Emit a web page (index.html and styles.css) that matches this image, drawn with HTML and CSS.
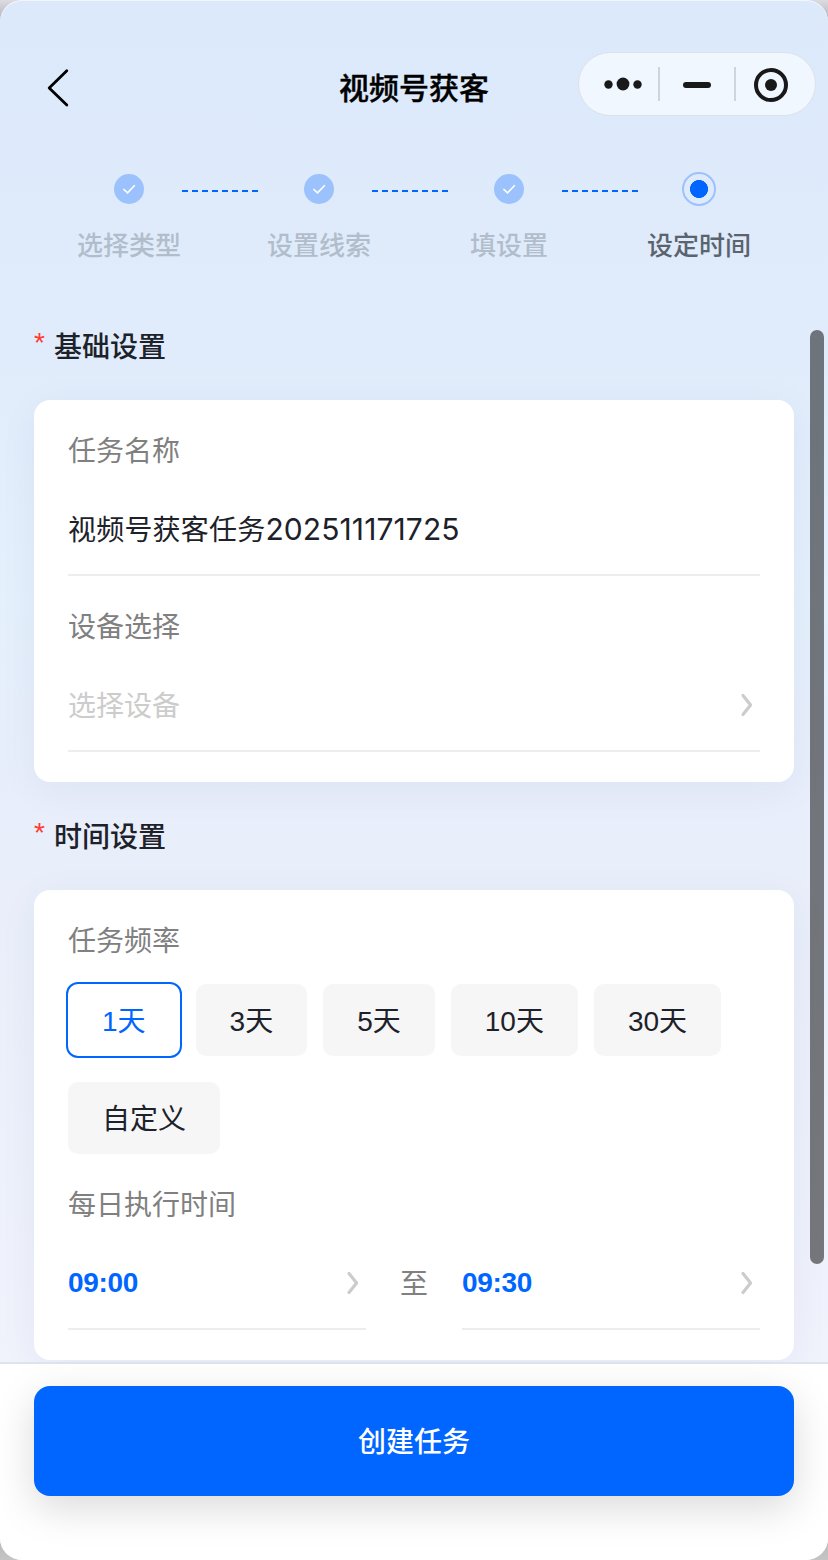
FILE: index.html
```html
<!DOCTYPE html>
<html lang="zh-CN">
<head>
    <meta charset="UTF-8">
    <title>视频号获客</title>
    <link rel="stylesheet" href="styles.css">
</head>
<body>
    <div class="window">
        <header class="navbar">
            <svg class="back" width="24" height="40" viewBox="0 0 24 40">
                <path d="M20.8 2.8 L3.2 20 L20.8 37" fill="none" stroke="#000" stroke-width="2.8" stroke-linecap="round" stroke-linejoin="round"/>
            </svg>
            <h1>视频号获客</h1>
            <!-- 小程序胶囊按钮 -->
            <div class="capsule">
                <svg width="238" height="64" viewBox="0 0 238 64" fill="#191919">
                    <circle cx="30.5" cy="32.5" r="4.2"/>
                    <circle cx="45" cy="32" r="6.4"/>
                    <circle cx="59.5" cy="32.5" r="4.2"/>
                    <rect x="80" y="15" width="2" height="34" fill="#cfd5de"/>
                    <rect x="105" y="30" width="28" height="6" rx="3"/>
                    <rect x="156" y="15" width="2" height="34" fill="#cfd5de"/>
                    <circle cx="193" cy="33" r="15" fill="none" stroke="#191919" stroke-width="4"/>
                    <circle cx="193" cy="33" r="6"/>
                </svg>
            </div>
        </header>

        <div class="steps">
            <div class="step">
                <svg class="dot" width="30" height="30" viewBox="0 0 30 30"><path d="M9.4 15 L13.5 18.9 L20.8 11.2"/></svg>
                <span>选择类型</span>
            </div>
            <div class="step">
                <svg class="dot" width="30" height="30" viewBox="0 0 30 30"><path d="M9.4 15 L13.5 18.9 L20.8 11.2"/></svg>
                <span>设置线索</span>
            </div>
            <div class="step">
                <svg class="dot" width="30" height="30" viewBox="0 0 30 30"><path d="M9.4 15 L13.5 18.9 L20.8 11.2"/></svg>
                <span>填设置</span>
            </div>
            <div class="step active">
                <div class="dot"></div>
                <span>设定时间</span>
            </div>
        </div>

        <main class="content">
            <h2><i>*</i>基础设置</h2>
            <div class="card">
                <div class="label">任务名称</div>
                <div class="field">
                    <span class="task_name">视频号获客任务<span class="num">202511171725</span></span>
                </div>
                <div class="label second">设备选择</div>
                <div class="field">
                    <span class="placeholder">选择设备</span>
                    <svg class="arrow" width="16" height="26" viewBox="0 0 16 26"><path d="M4 3.5 L11.6 13 L4 22.5"/></svg>
                </div>
            </div>

            <h2><i>*</i>时间设置</h2>
            <div class="card">
                <div class="label">任务频率</div>
                <div class="options">
                    <div class="option selected">1天</div>
                    <div class="option">3天</div>
                    <div class="option">5天</div>
                    <div class="option">10天</div>
                    <div class="option">30天</div>
                    <div class="option">自定义</div>
                </div>
                <div class="label">每日执行时间</div>
                <div class="time_row">
                    <div class="field">
                        <span class="time">09:00</span>
                        <svg class="arrow" width="16" height="26" viewBox="0 0 16 26"><path d="M4 3.5 L11.6 13 L4 22.5"/></svg>
                    </div>
                    <span class="to">至</span>
                    <div class="field">
                        <span class="time">09:30</span>
                        <svg class="arrow" width="16" height="26" viewBox="0 0 16 26"><path d="M4 3.5 L11.6 13 L4 22.5"/></svg>
                    </div>
                </div>
            </div>
        </main>

        <footer class="bottom">
            <button type="button">创建任务</button>
        </footer>
        <div class="scrollbar"></div>
    </div>
</body>
</html>
```

FILE: styles.css
```css
* {
    box-sizing: border-box;
}
body {
    margin: 0;
    background: linear-gradient(#dcdbe0 0, #b5b3bd 20px, #b5b5b5 1530px, #c4c4c4 1560px);
    font-family: "Liberation Sans", "Noto Sans CJK SC", sans-serif;
    font-size: 28px;
    color: #1d2129;
}
.window {
    position: relative;
    display: flex;
    flex-direction: column;
    height: 1560px;
    border-radius: 22px;
    overflow: hidden;
    background: linear-gradient(#dce9fb 0, #e0ecfb 340px, #e4f0fc 600px, #e7eefb 740px, #e9eefa 900px, #f0f3fc 1362px);
    box-shadow: inset 0 1px 0 #f2f7fd;
}

/* 顶部导航 */
.navbar {
    display: grid;
    grid-template-columns: 293px 1fr 238px;
    align-items: center;
    height: 64px;
    margin-top: 52px;
    padding: 0 12px 0 46px;
}
.back {
    margin-top: 8px;
}
h1 {
    margin: 10px 0 0;
    font-size: 30px;
    line-height: 40px;
    font-weight: 500;
    color: #000;
    -webkit-text-stroke: 0.4px;
}
.capsule {
    width: 238px;
    height: 64px;
    border: 1px solid #dde1e7;
    border-radius: 32px;
    background: #f1f7ff;
}
.capsule svg {
    display: block;
    margin: -1px;
}

/* 步骤条 */
.steps {
    display: flex;
    padding: 0 34px;
    margin-top: 56px;
}
.step {
    position: relative;
    width: 190px;
    height: 92px;
    display: flex;
    flex-direction: column;
    align-items: center;
    justify-content: space-between;
    padding-top: 2px;
    font-size: 26px;
    line-height: 36px;
    font-weight: 500;
    color: #b1bdcb;
}
.step:not(:last-child)::after {
    content: "";
    position: absolute;
    left: 148px;
    top: 18px;
    width: 76px;
    height: 2px;
    background: repeating-linear-gradient(90deg, #0066ff 0 6px, transparent 6px 10px);
}
.dot {
    border-radius: 50%;
    background: #9bc2fd;
}
.dot path {
    fill: none;
    stroke: #fff;
    stroke-width: 1.6;
}
.step.active {
    padding-top: 0;
    color: #5b636e;
}
.active .dot {
    width: 34px;
    height: 34px;
    border: 2px solid #9bc2fd;
    background: radial-gradient(circle, #0066ff 8.7px, transparent 9.3px);
}

/* 表单 */
.content {
    flex: 1;
    padding: 0 34px;
}
h2 {
    display: flex;
    margin: 64px 0 32px;
    font-size: 28px;
    line-height: 40px;
    font-weight: 500;
}
.card + h2 {
    margin-top: 36px;
}
h2 i {
    width: 20px;
    line-height: 30px;
    font-style: normal;
    font-weight: 400;
    color: #ff3b30;
}
.card {
    padding: 32px 34px 30px;
    border-radius: 16px;
    background: #fff;
    box-shadow: 0 8px 40px rgba(0, 30, 90, 0.05);
}
.label {
    line-height: 40px;
    color: #808080;
}
.label.second {
    margin-top: 32px;
}
.field {
    display: flex;
    align-items: center;
    justify-content: space-between;
    height: 104px;
    padding-top: 12px;
    border-bottom: 2px solid #ededed;
}
.task_name {
    margin-top: -2px;
    letter-spacing: 0.2px;
}
.num {
    font-family: Inter, sans-serif;
    font-size: 30px;
    letter-spacing: 0.1px;
}
.placeholder {
    margin-top: -2px;
    color: #ccc;
}
.arrow {
    margin-right: 5px;
}
.arrow path {
    fill: none;
    stroke: #ccc;
    stroke-width: 3.2;
    stroke-linecap: round;
    stroke-linejoin: round;
}
.options {
    display: flex;
    flex-wrap: wrap;
    gap: 26px 16px;
    margin: 22px 0 32px;
}
.option {
    height: 72px;
    padding: 0 34px;
    border-radius: 10px;
    line-height: 76px;
    background: #f6f6f6;
}
.option.selected {
    background: #fff;
    color: #0066ff;
    box-shadow: 0 0 0 2px #0066ff;
}
.time_row {
    display: flex;
    justify-content: space-between;
}
.time_row .field {
    width: 298px;
}
.time {
    font-weight: bold;
    letter-spacing: -0.3px;
    color: #0066ff;
}
.to {
    line-height: 40px;
    padding-top: 39px;
    color: #808080;
}

/* 底部按钮 */
.bottom {
    height: 196px;
    padding: 22px 34px 0;
    background: #fff;
    box-shadow: 0 -2px 0 #dfe3ec;
    z-index: 1;
}
button {
    display: block;
    width: 100%;
    height: 110px;
    padding: 0 0 2px;
    border: 0;
    border-radius: 16px;
    background: #0066ff;
    color: #fff;
    font: inherit;
    font-weight: 500;
    box-shadow: 0 12px 40px rgba(0, 0, 0, 0.15);
}
.scrollbar {
    position: absolute;
    top: 330px;
    right: 4px;
    width: 14px;
    height: 934px;
    border-radius: 7px;
    background: rgba(0, 0, 0, 0.51);
}
```
